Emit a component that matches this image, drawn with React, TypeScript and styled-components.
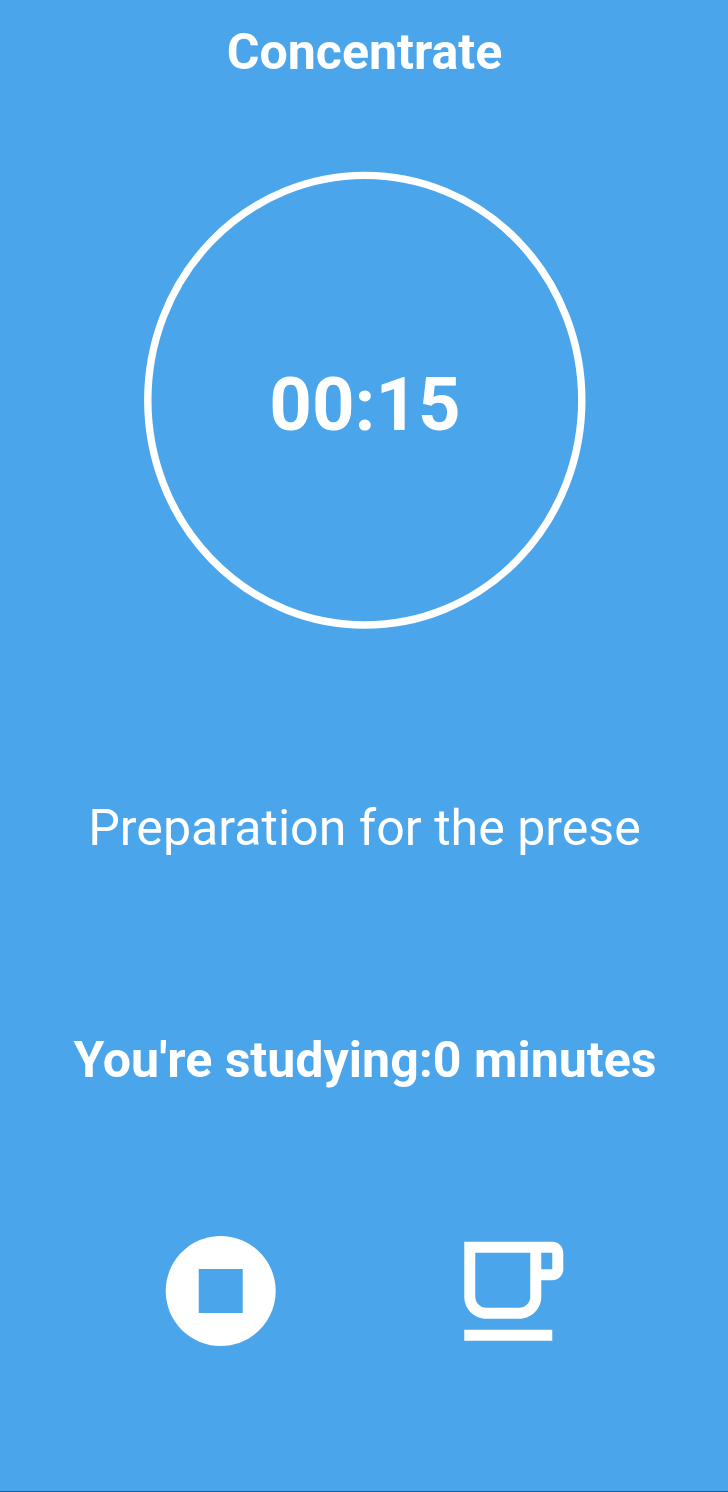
import React from "react";
import styled, { createGlobalStyle } from "styled-components";

const GlobalStyle = createGlobalStyle`
  body { margin: 0; background: #4ba5eb; }
`;

const Screen = styled.main`
  box-sizing: border-box;
  height: 1492px;
  display: flex;
  flex-direction: column;
  align-items: center;
  background: #4ba5eb;
  border-bottom: 1px solid #1b62a3;
  color: #fff;
  font-family: Roboto, sans-serif;
  white-space: nowrap;
`;

const Title = styled.h1`
  margin: 22px 0 0 1px;
  font-size: 50.1px;
  line-height: 60px;
  font-weight: 700;
`;

const Dial = styled.section`
  width: 442px;
  height: 458px;
  margin: 89px 0 0 2px;
  display: grid;
  place-items: center;

  > * {
    grid-area: 1 / 1;
  }
`;

const Ring = styled.svg`
  display: block;
  width: 442px;
  height: 458px;
  fill: none;
  stroke: currentColor;
  stroke-width: 7.4px;
`;

const Time = styled.time`
  font-size: 74.3px;
  line-height: 90px;
  font-weight: 700;
  margin-top: 9px;
`;

const Task = styled.p`
  margin: 169px 0 0 1px;
  font-size: 50.1px;
  line-height: 60px;
`;

const Summary = styled.p`
  margin: 172px 0 0 2px;
  font-size: 50.1px;
  line-height: 60px;
  font-weight: 700;
`;

const Controls = styled.nav`
  align-self: stretch;
  margin-top: 135px;
  display: flex;
  padding-left: 154.5px;
  gap: 155.5px;
`;

const IconButton = styled.button`
  display: block;
  padding: 0;
  border: 0;
  background: none;
  color: inherit;
`;

const Icon = styled.svg`
  display: block;
  width: 132px;
  height: 132px;
  fill: currentColor;
`;

export default function App() {
  return (
    <>
      <GlobalStyle />
      <Screen>
        <Title>Concentrate</Title>
        <Dial>
          <Ring viewBox="0 0 442 458" aria-hidden="true">
            <ellipse cx="220.8" cy="229.2" rx="217" ry="224.8" />
          </Ring>
          <Time>00:15</Time>
        </Dial>
        <Task>Preparation for the prese</Task>
        <Summary>You're studying:0 minutes</Summary>
        <Controls>
          <IconButton aria-label="Stop">
            <Icon viewBox="0.05 0 24 24">
              <path d="M12 2C6.48 2 2 6.48 2 12s4.48 10 10 10 10-4.48 10-10S17.52 2 12 2zm4 14H8V8h8v8z" />
            </Icon>
          </IconButton>
          <IconButton aria-label="Take a break">
            <Icon viewBox="-0.05 -0.05 24 24">
              <path d="M16 5v8c0 1.1-.9 2-2 2H8c-1.1 0-2-.9-2-2V5h10m4-2H4v10c0 2.21 1.79 4 4 4h6c2.21 0 4-1.79 4-4v-3h2c1.11 0 2-.9 2-2V5c0-1.11-.89-2-2-2zm-2 5V5h2v3h-2zm2 11H4v2h16v-2z" />
            </Icon>
          </IconButton>
        </Controls>
      </Screen>
    </>
  );
}
